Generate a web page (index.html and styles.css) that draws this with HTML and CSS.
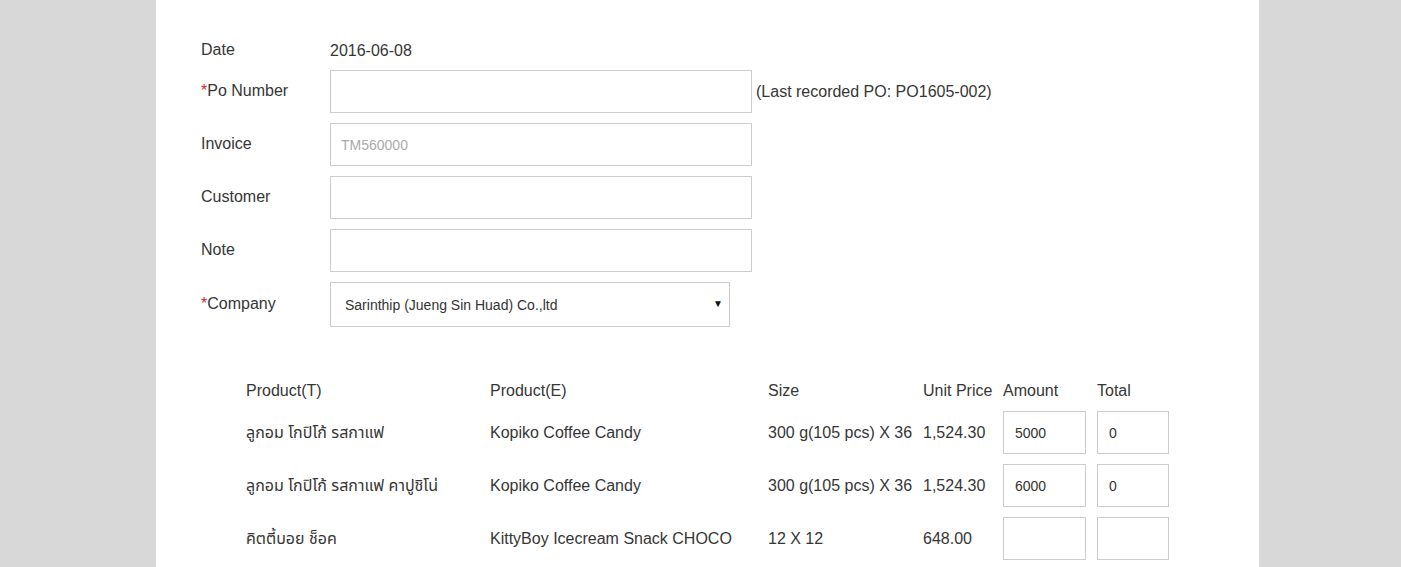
FILE: index.html
```html
<!DOCTYPE html>
<html lang="en">
<head>
    <meta charset="UTF-8">
    <meta name="viewport" content="width=device-width, initial-scale=1.0">
    <title>Purchase Order</title>
    <link rel="stylesheet" href="styles.css">
</head>
<body>
    <div class="panel">
        <div class="form">
            <div class="row date-row">
                <span class="label">Date</span>
                <span class="value">2016-06-08</span>
            </div>
            <div class="row">
                <label class="label" for="poNumber"><span class="req">*</span>Po Number</label>
                <input id="poNumber" class="field" type="text">
                <span class="hint">(Last recorded PO: PO1605-002)</span>
            </div>
            <div class="row">
                <label class="label" for="invoice">Invoice</label>
                <input id="invoice" class="field" type="text" placeholder="TM560000">
            </div>
            <div class="row">
                <label class="label" for="customer">Customer</label>
                <input id="customer" class="field" type="text">
            </div>
            <div class="row">
                <label class="label" for="note">Note</label>
                <input id="note" class="field" type="text">
            </div>
            <div class="row">
                <label class="label" for="company"><span class="req">*</span>Company</label>
                <div class="select-wrap">
                    <select id="company" class="select">
                        <option>Sarinthip (Jueng Sin Huad) Co.,ltd</option>
                    </select>
                    <span class="arrow">&#9660;</span>
                </div>
            </div>
        </div>

        <table class="products">
            <colgroup>
                <col class="c-t">
                <col class="c-e">
                <col class="c-size">
                <col class="c-price">
                <col class="c-amount">
                <col class="c-total">
            </colgroup>
            <thead>
                <tr>
                    <th>Product(T)</th>
                    <th>Product(E)</th>
                    <th>Size</th>
                    <th>Unit Price</th>
                    <th>Amount</th>
                    <th>Total</th>
                </tr>
            </thead>
            <tbody>
                <tr>
                    <td>ลูกอม โกปิโก้ รสกาแฟ</td>
                    <td>Kopiko Coffee Candy</td>
                    <td>300 g(105 pcs) X 36</td>
                    <td>1,524.30</td>
                    <td><input class="cell amount" type="text" value="5000"></td>
                    <td><input class="cell total" type="text" value="0"></td>
                </tr>
                <tr>
                    <td>ลูกอม โกปิโก้ รสกาแฟ คาปูชิโน่</td>
                    <td>Kopiko Coffee Candy</td>
                    <td>300 g(105 pcs) X 36</td>
                    <td>1,524.30</td>
                    <td><input class="cell amount" type="text" value="6000"></td>
                    <td><input class="cell total" type="text" value="0"></td>
                </tr>
                <tr>
                    <td>คิตตี้บอย ช็อค</td>
                    <td>KittyBoy Icecream Snack CHOCO</td>
                    <td>12 X 12</td>
                    <td>648.00</td>
                    <td><input class="cell amount" type="text"></td>
                    <td><input class="cell total" type="text"></td>
                </tr>
            </tbody>
        </table>
    </div>
</body>
</html>
```

FILE: styles.css
```css
html, body {
    height: 100%;
}
body {
    margin: 0;
    background: #d8d8d8;
    font-family: "Liberation Sans", Arial, "Noto Sans Thai", "DejaVu Sans", sans-serif;
    font-size: 16px;
    color: #363636;
    overflow: hidden;
}
.panel {
    width: 1103px;
    margin-left: 156px;
    min-height: 100%;
    background: #fff;
    padding: 41px 45px 0;
    box-sizing: border-box;
}
.form {
    display: flex;
    flex-direction: column;
    gap: 10px;
}
.row {
    display: flex;
    align-items: center;
}
.date-row {
    height: 19px;
}
.label {
    width: 129px;
    flex-shrink: 0;
    line-height: 20px;
    margin-top: -1px;
}
.req {
    color: #c9302c;
}
.field {
    width: 422px;
    height: 43px;
    box-sizing: border-box;
    border: 1px solid #ccc;
    padding: 0 10px;
    font-family: inherit;
    font-size: 14px;
    color: #333;
    outline: none;
}
.field::placeholder {
    color: #aaa;
}
.hint {
    margin-left: 4px;
}
.select-wrap {
    position: relative;
}
.select {
    appearance: none;
    width: 400px;
    height: 45px;
    box-sizing: border-box;
    border: 1px solid #ccc;
    background: #fff;
    padding: 0 14px;
    font-family: inherit;
    font-size: 14px;
    color: #333;
}
.arrow {
    position: absolute;
    right: 7px;
    top: 16px;
    font-size: 10px;
    color: #111;
    pointer-events: none;
}
.products {
    margin: 49px 0 0 45px;
    border-collapse: collapse;
    table-layout: fixed;
    width: 931px;
}
.c-t { width: 244px; }
.c-e { width: 278px; }
.c-size { width: 155px; }
.c-price { width: 80px; }
.c-amount { width: 94px; }
.c-total { width: 80px; }
.products th,
.products td {
    padding: 5px 0;
    text-align: left;
    font-weight: normal;
    line-height: 20px;
    white-space: nowrap;
}
.products td {
    height: 43px;
}
.cell {
    height: 43px;
    box-sizing: border-box;
    border: 1px solid #ccc;
    padding: 0 11px;
    font-family: inherit;
    font-size: 14px;
    color: #333;
    display: block;
}
.amount {
    width: 83px;
}
.total {
    width: 72px;
}
```
